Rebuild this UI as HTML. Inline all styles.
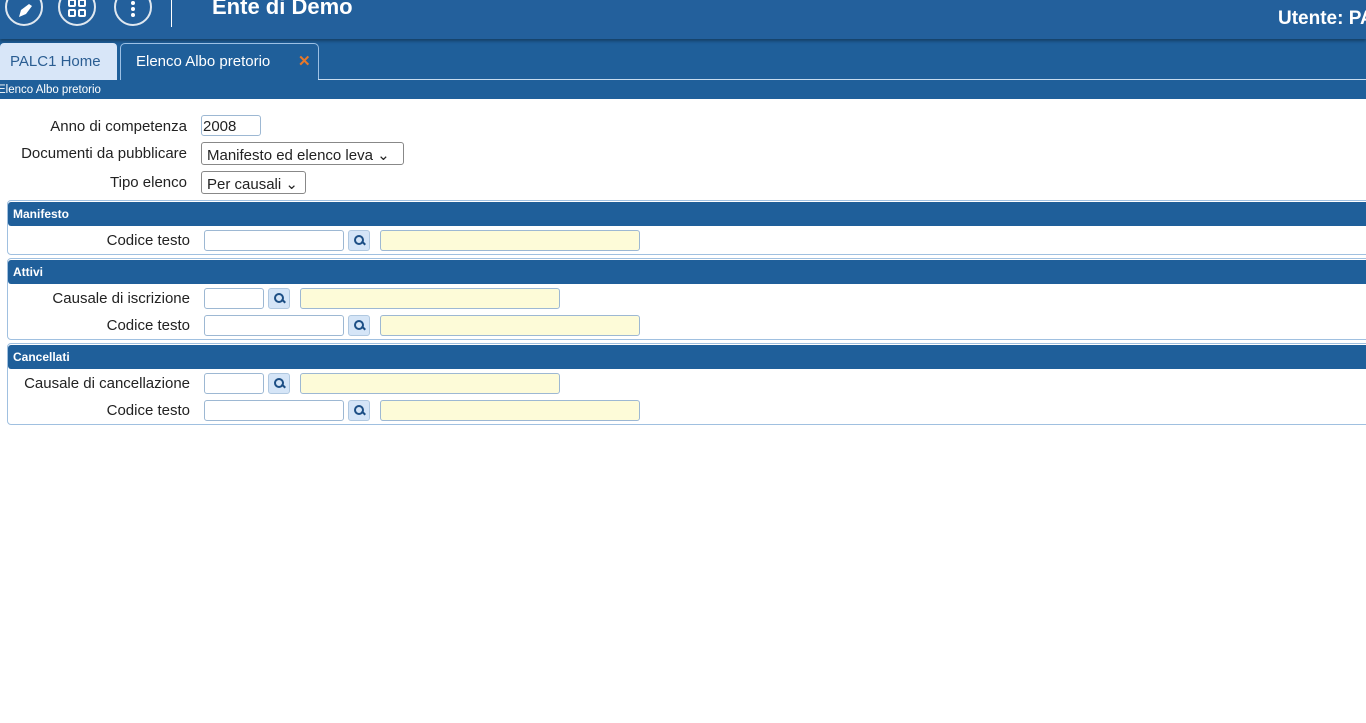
<!DOCTYPE html>
<html><head><meta charset="utf-8"><style>
*{box-sizing:border-box}
body{margin:0;width:1366px;height:723px;overflow:hidden;background:#fff;font-family:"Liberation Sans",sans-serif;font-size:15px;color:#222}
.top{position:absolute;left:0;top:0;width:1366px;height:99px;background:#1f5f9a}
.hdr{position:absolute;left:0;top:0;width:1366px;height:39px;background:#23609c;box-shadow:0 2px 3px rgba(0,0,0,.35)}
.circ{position:absolute;top:-12px;width:38px;height:38px;border:2px solid #e0e8f0;border-radius:50%}
.circ svg{position:absolute;left:0;top:0}
.title{position:absolute;left:212px;top:-6px;color:#fff;font-weight:bold;font-size:22px}
.user{position:absolute;left:1278px;top:8px;color:#fff;font-weight:bold;font-size:19px;white-space:nowrap}
.tab1{position:absolute;left:0;top:43px;width:117px;height:37px;background:#d8e6f8;color:#2a5d92;border-radius:4px 4px 0 0;padding:10px 0 0 10px}
.tab2{position:absolute;left:120px;top:43px;width:199px;height:37px;background:#1f5f9a;color:#fff;border:1px solid #9cc0e4;border-bottom:none;border-radius:5px 5px 0 0;padding:9px 0 0 15px}
.line{position:absolute;left:318px;top:79px;width:1048px;height:1px;background:#c8dcef}
.sub{position:absolute;left:-2px;top:84px;color:#fff;font-size:11.5px}
.lbl{position:absolute;text-align:right}
.in{position:absolute;height:21px;border:1px solid #9db8d3;border-radius:3px;background:#fff}
.y{background:#fdfbd8}
.btn{position:absolute;width:22px;height:21px;background:#d5e5f7;border:1px solid #b0c8e0;border-radius:3px}
.btn::before{content:"";position:absolute;left:5px;top:4px;width:6px;height:6px;border:2px solid #1d4f85;border-radius:50%}
.btn::after{content:"";position:absolute;left:12px;top:11px;width:5px;height:2px;background:#1d4f85;transform:rotate(45deg)}
.sel{position:absolute;height:23px;border:1px solid #888;border-radius:3px;padding:3px 0 0 5px;font-size:15px}
.box{position:absolute;left:7px;width:1370px;border:1px solid #a0c0e0;border-radius:4px}
.bh{position:absolute;left:8px;width:1370px;height:24px;background:#1f5f9a;color:#fff;font-weight:bold;font-size:12px;padding:5px 0 0 5px;border-radius:3px 0 0 3px}
</style></head><body>
<div class="top"></div>
<div class="hdr"></div>
<div class="circ" style="left:5px"><svg width="34" height="34"><path d="M22 14 L14 20 L12 27 L19 24 L25 16 Z" fill="#fff"/></svg></div>
<div class="circ" style="left:58px"><svg width="34" height="34"><g fill="none" stroke="#fff" stroke-width="2"><rect x="9" y="10" width="6" height="6" rx="1"/><rect x="19" y="10" width="6" height="6" rx="1"/><rect x="9" y="20" width="6" height="6" rx="1"/><rect x="19" y="20" width="6" height="6" rx="1"/></g></svg></div>
<div class="circ" style="left:114px"><svg width="34" height="34"><g fill="#fff"><circle cx="17" cy="13" r="2"/><circle cx="17" cy="19" r="2"/><circle cx="17" cy="25" r="2"/></g></svg></div>
<div style="position:absolute;left:171px;top:0;width:1px;height:27px;background:#fff"></div>
<div class="title">Ente di Demo</div>
<div class="user">Utente: PA</div>
<div class="tab1">PALC1 Home</div>
<div class="tab2">Elenco Albo pretorio<span style="position:absolute;left:177px;top:8px;color:#e8782a;font-weight:bold">✕</span></div>
<div class="line"></div>
<div class="sub">Elenco Albo pretorio</div>

<div class="lbl" style="right:1179px;top:118px">Anno di competenza</div>
<div class="in" style="left:201px;top:115px;width:60px;padding:2px 0 0 1px">2008</div>
<div class="lbl" style="right:1179px;top:145px">Documenti da pubblicare</div>
<div class="sel" style="left:201px;top:142px;width:203px">Manifesto ed elenco leva ⌄</div>
<div class="lbl" style="right:1179px;top:174px">Tipo elenco</div>
<div class="sel" style="left:201px;top:171px;width:105px">Per causali ⌄</div>

<div class="box" style="top:200px;height:55px"></div><div class="bh" style="top:202px">Manifesto</div>
<div class="lbl" style="right:1176px;top:232px">Codice testo</div>
<div class="in" style="left:204px;top:230px;width:140px"></div><div class="btn" style="left:348px;top:230px"></div><div class="in y" style="left:380px;top:230px;width:260px"></div>

<div class="box" style="top:258px;height:82px"></div><div class="bh" style="top:260px">Attivi</div>
<div class="lbl" style="right:1176px;top:290px">Causale di iscrizione</div>
<div class="in" style="left:204px;top:288px;width:60px"></div><div class="btn" style="left:268px;top:288px"></div><div class="in y" style="left:300px;top:288px;width:260px"></div>
<div class="lbl" style="right:1176px;top:317px">Codice testo</div>
<div class="in" style="left:204px;top:315px;width:140px"></div><div class="btn" style="left:348px;top:315px"></div><div class="in y" style="left:380px;top:315px;width:260px"></div>

<div class="box" style="top:343px;height:82px"></div><div class="bh" style="top:345px">Cancellati</div>
<div class="lbl" style="right:1176px;top:375px">Causale di cancellazione</div>
<div class="in" style="left:204px;top:373px;width:60px"></div><div class="btn" style="left:268px;top:373px"></div><div class="in y" style="left:300px;top:373px;width:260px"></div>
<div class="lbl" style="right:1176px;top:402px">Codice testo</div>
<div class="in" style="left:204px;top:400px;width:140px"></div><div class="btn" style="left:348px;top:400px"></div><div class="in y" style="left:380px;top:400px;width:260px"></div>
</body></html>
